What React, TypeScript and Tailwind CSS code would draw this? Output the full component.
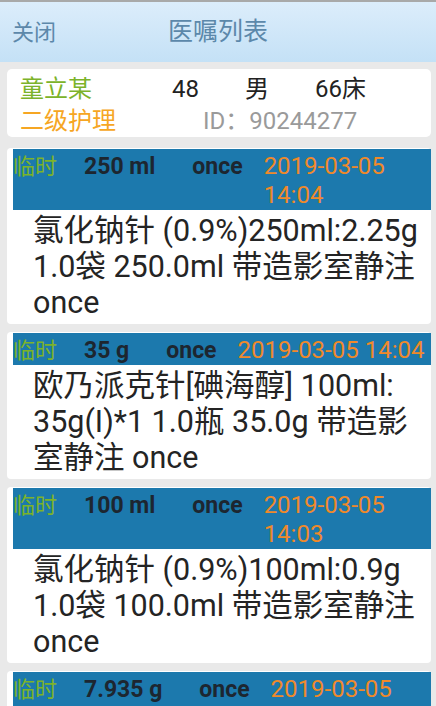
const font = "font-['Roboto','Noto_Sans_CJK_SC',sans-serif]"

type Order = {
  dose: string
  freq: string
  time: string
  text: React.ReactNode
}

const orders: Order[] = [
  {
    dose: "250 ml",
    freq: "once",
    time: "2019-03-05 14:04",
    text: "氯化钠针 (0.9%)250ml:2.25g 1.0袋 250.0ml 带造影室静注 once",
  },
  {
    dose: "35 g",
    freq: "once",
    time: "2019-03-05 14:04",
    text: (
      <>
        欧乃派克针[碘海醇] 100ml:<wbr />35g(I)*1 1.0瓶 35.0g 带造影<wbr />室静注 once
      </>
    ),
  },
  {
    dose: "100 ml",
    freq: "once",
    time: "2019-03-05 14:03",
    text: "氯化钠针 (0.9%)100ml:0.9g 1.0袋 100.0ml 带造影室静注 once",
  },
  {
    dose: "7.935 g",
    freq: "once",
    time: "2019-03-05 14:03",
    text: "",
  },
]

function OrderCard({ order }: { order: Order }) {
  return (
    <div className="mt-2 ml-[7px] mr-[5px] rounded-[4px] bg-white pt-[1px]">
      {/* 头部：类型 剂量 频次 时间 */}
      <div className="ml-[6px] flex items-start bg-[#1c79ad] pt-[3px] leading-[29px]">
        <span className="shrink-0 text-[22px] text-[#7cb32a]">临时</span>
        <span className="ml-[27px] shrink-0 whitespace-nowrap text-[23px] font-bold text-[#1d2630]">
          {order.dose}
        </span>
        <span className="ml-[37px] shrink-0 text-[23px] font-bold text-[#1d2630]">
          {order.freq}
        </span>
        <span className="ml-[21px] min-w-0 flex-1 text-[24px] text-[#f0892a]">
          {order.time}
        </span>
      </div>
      <div className="pt-[3px] pb-[3px] pl-[26px] text-[30.5px] leading-[36px] text-[#242424]">
        {order.text}
      </div>
    </div>
  )
}

export default function App() {
  return (
    <div className={`${font} h-[706px] overflow-hidden bg-[#e9e9e9]`}>
      {/* 标题栏 */}
      <div className="border-t-2 border-[#a9a9a9] bg-gradient-to-b from-[#dcedfb] to-[#c4e1f6]">
        <div className="relative flex h-[60px] items-center px-3">
          <span className="text-[22px] text-[#5c88aa]">关闭</span>
          <span className="absolute left-0 right-0 text-center text-[25px] text-[#5c88aa]">
            医嘱列表
          </span>
        </div>
      </div>

      {/* 病人信息 */}
      <div className="mt-[7px] ml-[7px] mr-[5px] rounded-[5px] bg-white pt-[4px] pl-[13px] text-[24px] leading-[32px]">
        <div className="flex">
          <span className="w-[152px] text-[#7cb32a]">童立某</span>
          <span className="w-[73px] text-[#222]">48</span>
          <span className="w-[70px] text-[#222]">男</span>
          <span className="text-[#222]">66床</span>
        </div>
        <div className="flex">
          <span className="w-[183px] text-[#f6a623]">二级护理</span>
          <span className="text-[#9a9a9a]">ID：90244277</span>
        </div>
      </div>

      {/* 医嘱列表 */}
      <div className="pt-[3px]">
        {orders.map((o, i) => (
          <OrderCard key={i} order={o} />
        ))}
      </div>
    </div>
  )
}
